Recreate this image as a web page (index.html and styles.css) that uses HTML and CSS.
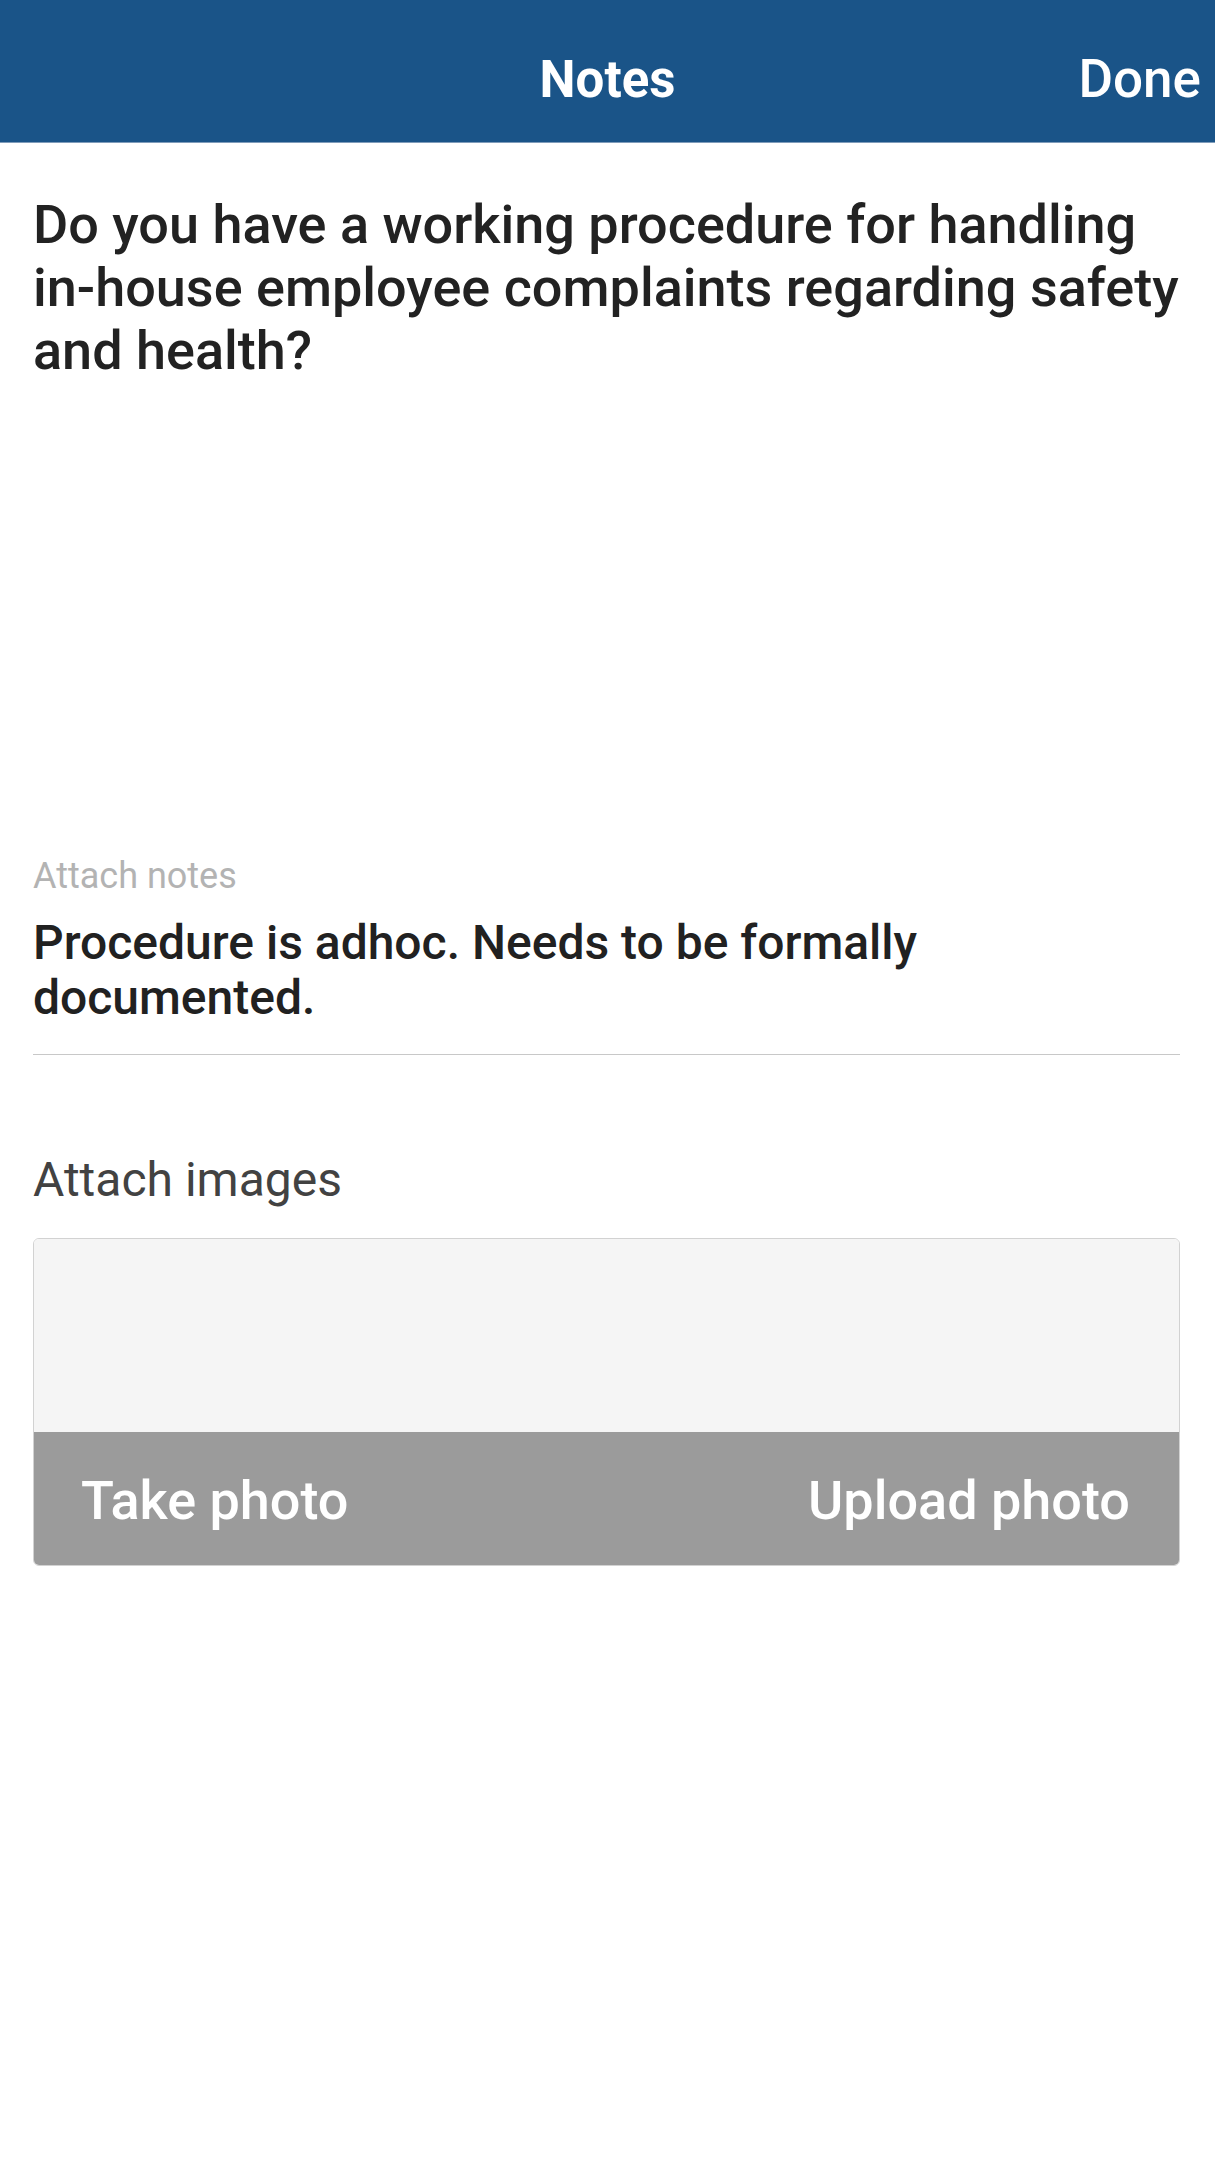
FILE: index.html
```html
<!DOCTYPE html>
<html lang="en">
<head>
    <meta charset="UTF-8">
    <meta name="viewport" content="width=device-width, initial-scale=1.0">
    <title>Notes</title>
    <link rel="stylesheet" href="styles.css">
</head>
<body>
    <div class="topbar">
        <div class="topbar-title">Notes</div>
        <div class="topbar-done">Done</div>
    </div>

    <div class="content">
        <h1 class="question">Do you have a working procedure for handling in-house employee complaints regarding safety and health?</h1>

        <!-- Notes field -->
        <div class="notes-field">
            <div class="notes-label">Attach notes</div>
            <div class="notes-text">Procedure is adhoc. Needs to be formally documented.</div>
        </div>

        <!-- Images -->
        <h2 class="images-title">Attach images</h2>
        <div class="image-box">
            <div class="image-preview"></div>
            <div class="image-actions">
                <span class="action">Take photo</span>
                <span class="action">Upload photo</span>
            </div>
        </div>
    </div>
</body>
</html>
```

FILE: styles.css
```css
body {
    margin: 0;
    font-family: Roboto, "Liberation Sans", sans-serif;
    background-color: #ffffff;
    color: #212121;
}
.topbar {
    height: 143px;
    box-sizing: border-box;
    padding: 16px 14px 0 14px;
    background-color: #1a5488;
    border-bottom: 1px solid #7f9cba;
    display: flex;
    align-items: center;
    justify-content: flex-end;
    position: relative;
    color: #ffffff;
}
.topbar-title {
    position: absolute;
    left: 0;
    right: 0;
    top: 16px;
    bottom: 0;
    display: flex;
    align-items: center;
    justify-content: center;
    font-size: 51px;
    font-weight: 700;
}
.topbar-done {
    font-size: 53px;
    font-weight: 500;
}
.content {
    padding: 0 35px 0 33px;
}
.question {
    margin: 50px 0 0 0;
    font-size: 54px;
    line-height: 63px;
    font-weight: 500;
    color: #222222;
}
.notes-field {
    margin-top: 473px;
    padding-bottom: 29px;
    border-bottom: 1px solid #c8c8c8;
}
.notes-label {
    font-size: 36px;
    line-height: 42px;
    color: #b3b3b3;
}
.notes-text {
    margin-top: 18px;
    font-size: 48px;
    line-height: 55px;
    font-weight: 500;
    color: #212121;
}
.images-title {
    margin: 97px 0 0 0;
    font-size: 48px;
    line-height: 56px;
    font-weight: 400;
    color: #424242;
}
.image-box {
    margin-top: 30px;
    border: 1px solid #d2d2d2;
    border-radius: 6px;
    overflow: hidden;
}
.image-preview {
    height: 193px;
    background-color: #f5f5f5;
}
.image-actions {
    height: 133px;
    box-sizing: border-box;
    padding: 4px 49px 0 47px;
    background-color: #9b9b9b;
    display: flex;
    align-items: center;
    justify-content: space-between;
}
.action {
    font-size: 54px;
    font-weight: 500;
    color: #ffffff;
}
```
